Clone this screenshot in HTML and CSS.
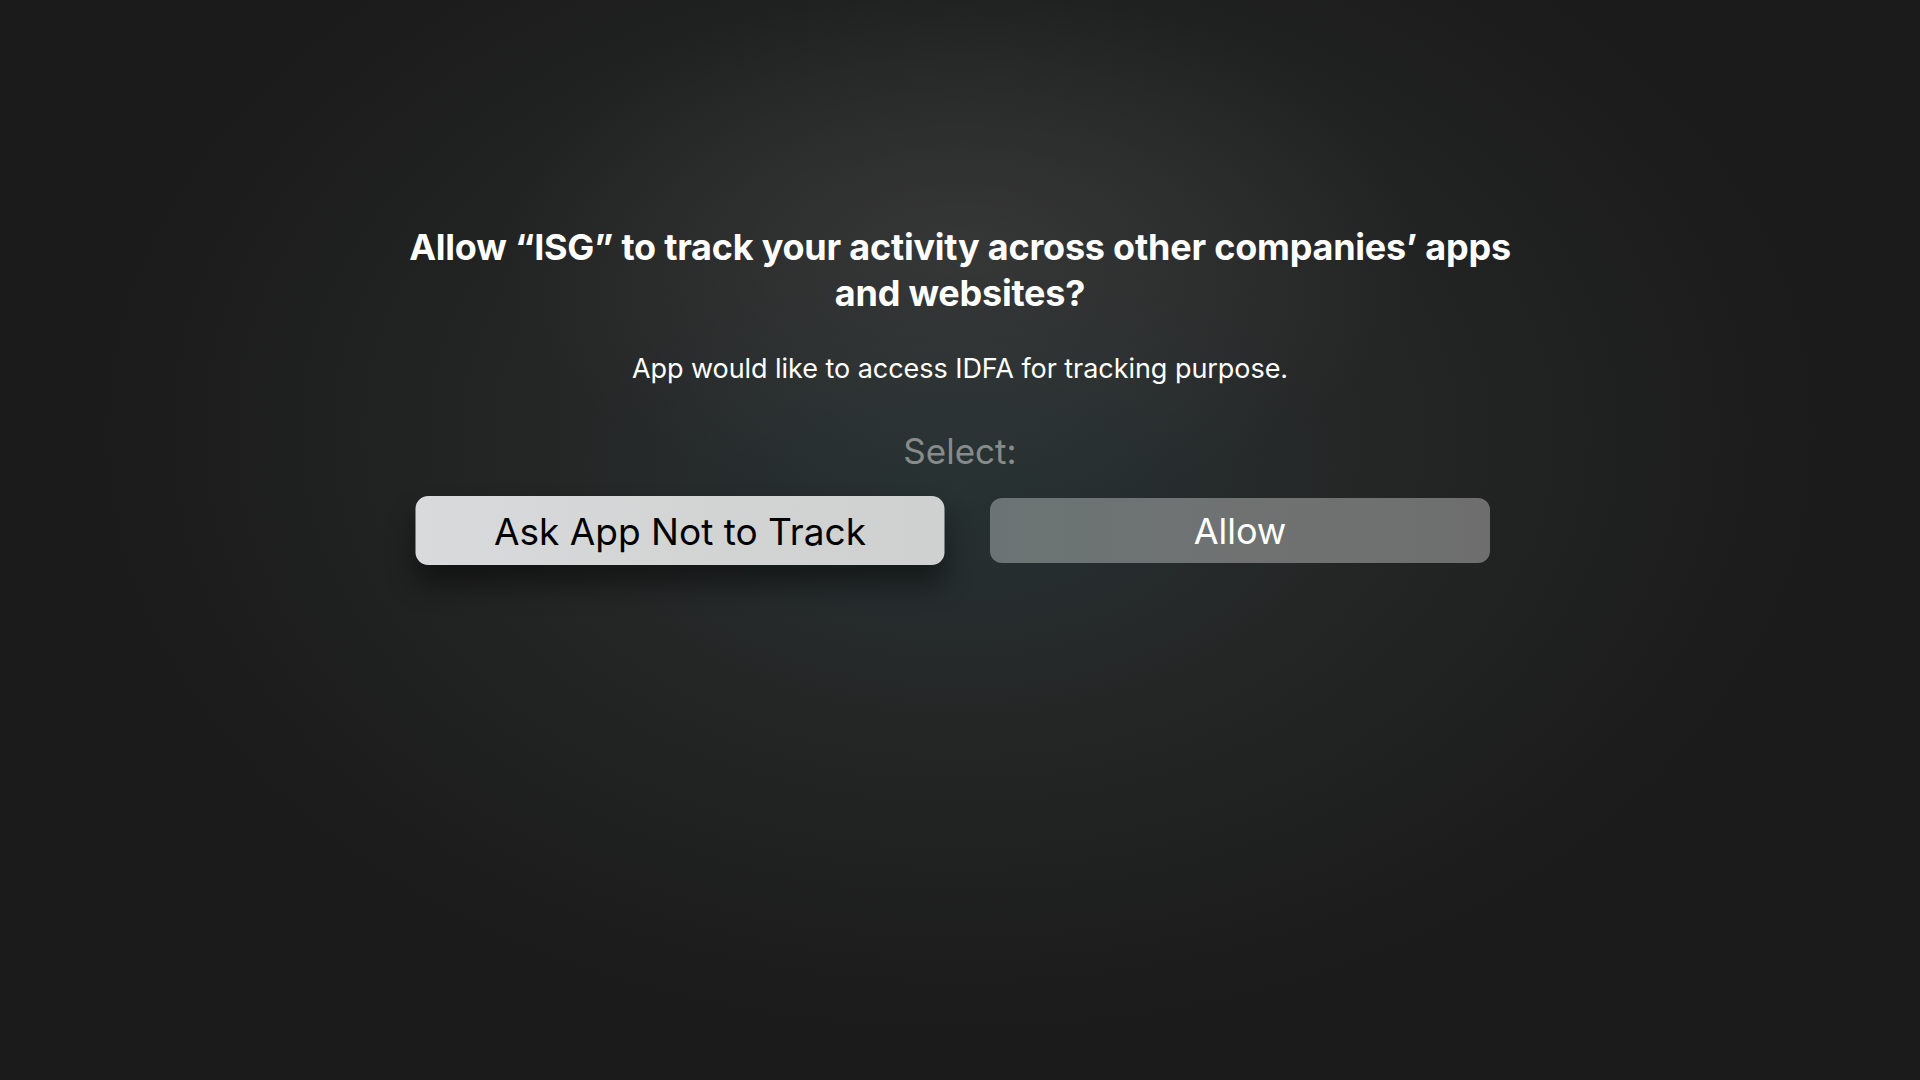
FILE: index.html
```html
<!DOCTYPE html>
<html lang="en">
<head>
<meta charset="utf-8">
<title>Tracking permission</title>
<link rel="stylesheet" href="styles.css">
</head>
<body>
<main class="screen">
  <section class="alert">
    <h1 class="title">Allow “ISG” to track your activity across other companies’ apps<br>and websites?</h1>
    <p class="message">App would like to access IDFA for tracking purpose.</p>
    <p class="prompt">Select:</p>
    <div class="actions">
      <button class="btn btn-focused">Ask App Not to Track</button>
      <button class="btn btn-plain">Allow</button>
    </div>
  </section>
</main>
</body>
</html>
```
FILE: styles.css
```css
html, body {
  margin: 0;
  padding: 0;
  width: 1920px;
  height: 1080px;
  overflow: hidden;
}
body {
  background: #1c1c1c;
  font-family: Inter, "Noto Sans", "Liberation Sans", sans-serif;
}
.screen {
  width: 1920px;
  height: 1080px;
  box-sizing: border-box;
  padding-top: 224px;
  background:
    radial-gradient(ellipse 460px 260px at 50% 23%, rgba(64, 64, 64, 0.6), rgba(62, 62, 62, 0) 100%),
    radial-gradient(ellipse 420px 260px at 50% 44%, rgba(36, 52, 54, 0.7), rgba(36, 52, 54, 0) 100%),
    radial-gradient(ellipse 860px 600px at 50% 40%, #2a2b2b 0%, #252626 45%, #1b1b1b 100%);
}
.alert {
  display: flex;
  flex-direction: column;
  align-items: center;
  text-align: center;
}
.title {
  margin: 0;
  font-size: 36px;
  line-height: 46px;
  font-weight: 700;
  color: #ffffff;
  letter-spacing: -0.22px;
}
.message {
  margin: 35px 0 0;
  font-size: 27px;
  line-height: 36px;
  font-weight: 400;
  color: #ffffff;
  letter-spacing: -0.05px;
}
.prompt {
  margin: 42px 0 0;
  font-size: 35px;
  line-height: 44px;
  color: #878b8b;
}
.actions {
  margin-top: 25px;
  display: flex;
  gap: 60px;
}
.btn {
  width: 500px;
  height: 65px;
  border: none;
  border-radius: 12px;
  font-family: inherit;
  font-size: 36px;
  font-weight: 400;
  padding: 0;
}
.btn-focused {
  font-size: 35px;
  background: linear-gradient(90deg, #d9dadb 0%, #d2d3d3 60%, #cfd0d0 100%);
  color: #000000;
  transform: scale(1.058);
  box-shadow: 0 18px 26px rgba(0, 0, 0, 0.45);
}
.btn-plain {
  background: linear-gradient(90deg, #6b7474 0%, #707272 50%, #6e6e6e 100%);
  color: #ffffff;
}
```
